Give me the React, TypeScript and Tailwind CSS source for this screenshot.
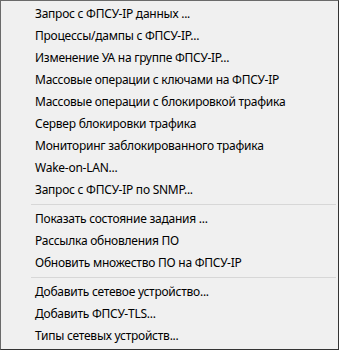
import React from "react";

const groups: string[][] = [
  [
    "Запрос с ФПСУ-IP данных ...",
    "Процессы/дампы с ФПСУ-IP...",
    "Изменение УА на группе ФПСУ-IP...",
    "Массовые операции с ключами на ФПСУ-IP",
    "Массовые операции с блокировкой трафика",
    "Сервер блокировки трафика",
    "Мониторинг заблокированного трафика",
    "Wake-on-LAN...",
    "Запрос с ФПСУ-IP по SNMP...",
  ],
  [
    "Показать состояние задания ...",
    "Рассылка обновления ПО",
    "Обновить множество ПО на ФПСУ-IP",
  ],
  [
    "Добавить сетевое устройство...",
    "Добавить ФПСУ-TLS...",
    "Типы сетевых устройств...",
  ],
];

export default function App() {
  return (
    <div
      className="w-[339px] h-[350px] bg-[#f0f0f0] border border-[#6a6a6a] border-r-[#333333] border-b-[#333333] py-[2px] pr-[2px] flex flex-col text-[12px] text-black tracking-[-0.25px]"
      style={{ fontFamily: '"Segoe UI", "Noto Sans", sans-serif' }}
    >
      {groups.map((g, gi) => (
        <React.Fragment key={gi}>
          {gi > 0 && (
            <div className="h-[7px] flex items-center pl-[30px]">
              <div className="h-px w-full bg-[#d7d7d7]" />
            </div>
          )}
          {g.map((t) => (
            <div key={t} className="h-[22px] flex items-center pl-[34px] pb-px leading-none whitespace-nowrap">
              {t}
            </div>
          ))}
        </React.Fragment>
      ))}
    </div>
  );
}
